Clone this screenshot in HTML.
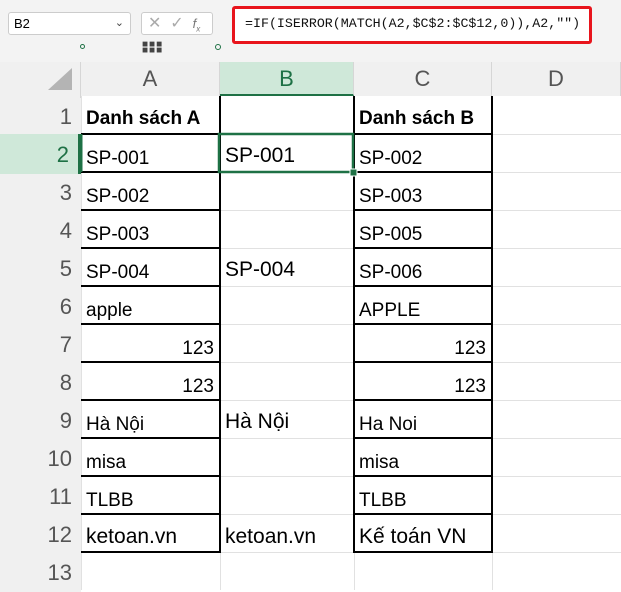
<!DOCTYPE html><html><head><meta charset="utf-8"><style>
*{margin:0;padding:0;box-sizing:border-box}
body{width:621px;height:590px;overflow:hidden;background:#fff;font-family:"Liberation Sans",sans-serif;position:relative}
.a{position:absolute}
.top{left:0;top:0;width:621px;height:62px;background:#f3f3f3}
.cell{position:absolute;font-size:19px;color:#000;white-space:nowrap;padding-left:5px;line-height:38px}
.rh{position:absolute;left:0;width:81px;text-align:right;padding-right:9px;font-size:22px;color:#555;line-height:38px;background:#f0f0f0}
.ch{position:absolute;top:62px;height:34px;font-size:22px;color:#555;text-align:center;line-height:34px;background:#f0f0f0;border-right:1px solid #d6d6d6}
</style></head><body>
<div class="a top"></div>
<div class="a" style="left:8px;top:12px;width:123px;height:23px;background:#fff;border:1px solid #ccc;border-radius:3px;font-size:13px;line-height:21px;padding-left:5px">B2<span style="position:absolute;right:6px;top:0;font-size:11px;color:#444">&#8964;</span></div>
<div class="a" style="top:12px;width:72px;height:23px;background:#fff;border:1px solid #ccc;border-radius:3px;left:141px;font-size:16px;color:#aaa;line-height:21px;padding-left:6px">✕&nbsp;&nbsp;✓&nbsp;&nbsp;<i style="font-size:13px;color:#777">f<sub style="font-size:8px">x</sub></i></div>
<div class="a" style="left:232px;top:6px;width:360px;height:38px;border:3px solid #e8141c;border-radius:3px;background:#fff"></div>
<div class="a" style="left:236px;top:10px;width:350px;height:30px;font-family:'Liberation Mono',monospace;font-size:13.3px;line-height:28px;padding-left:9px;color:#111;white-space:nowrap">=IF(ISERROR(MATCH(A2,$C$2:$C$12,0)),A2,"")</div>
<div class="a" style="left:80px;top:44px;width:5px;height:5px;border:1.5px solid #1e7145;border-radius:50%"></div>
<div class="a" style="left:215px;top:44px;width:6px;height:6px;border:1.5px solid #1e7145;border-radius:50%"></div>
<div class="a" style="left:142px;top:42px;font-size:10px;letter-spacing:1px;color:#444;line-height:6px">■■■<br>■■■</div>
<div class="a" style="left:0;top:62px;width:81px;height:34px;background:#f0f0f0;border-right:1px solid #d6d6d6"></div>
<div class="a" style="left:48px;top:68px;width:0;height:0;border-left:24px solid transparent;border-bottom:22px solid #b4b4b4"></div>
<div class="ch" style="left:81px;width:139px">A</div>
<div class="ch" style="left:220px;width:134px;background:#cfe8d9;color:#1e7145;border-bottom:2px solid #1e7145">B</div>
<div class="ch" style="left:354px;width:138px">C</div>
<div class="ch" style="left:492px;width:129px">D</div>
<svg class="a" style="left:0;top:96px" width="621" height="494">
<g stroke="#e1e1e1" stroke-width="1">
<line x1="81" y1="38.5" x2="621" y2="38.5"/><line x1="81" y1="76.5" x2="621" y2="76.5"/><line x1="81" y1="114.5" x2="621" y2="114.5"/><line x1="81" y1="152.5" x2="621" y2="152.5"/><line x1="81" y1="190.5" x2="621" y2="190.5"/><line x1="81" y1="228.5" x2="621" y2="228.5"/><line x1="81" y1="266.5" x2="621" y2="266.5"/><line x1="81" y1="304.5" x2="621" y2="304.5"/><line x1="81" y1="342.5" x2="621" y2="342.5"/><line x1="81" y1="380.5" x2="621" y2="380.5"/><line x1="81" y1="418.5" x2="621" y2="418.5"/><line x1="81" y1="456.5" x2="621" y2="456.5"/>
<line x1="81.5" y1="0" x2="81.5" y2="494"/><line x1="220.5" y1="0" x2="220.5" y2="494"/><line x1="354.5" y1="0" x2="354.5" y2="494"/><line x1="492.5" y1="0" x2="492.5" y2="494"/>
</g>
<g stroke="#000" stroke-width="2">
<line x1="220" y1="0" x2="220" y2="457"/><line x1="354" y1="0" x2="354" y2="457"/><line x1="492" y1="0" x2="492" y2="457"/>
<line x1="81" y1="38" x2="220" y2="38"/><line x1="81" y1="76" x2="220" y2="76"/><line x1="81" y1="114" x2="220" y2="114"/><line x1="81" y1="152" x2="220" y2="152"/><line x1="81" y1="190" x2="220" y2="190"/><line x1="81" y1="228" x2="220" y2="228"/><line x1="81" y1="266" x2="220" y2="266"/><line x1="81" y1="304" x2="220" y2="304"/><line x1="81" y1="342" x2="220" y2="342"/><line x1="81" y1="380" x2="220" y2="380"/><line x1="81" y1="418" x2="220" y2="418"/><line x1="81" y1="456" x2="220" y2="456"/>
<line x1="354" y1="38" x2="492" y2="38"/><line x1="354" y1="76" x2="492" y2="76"/><line x1="354" y1="114" x2="492" y2="114"/><line x1="354" y1="152" x2="492" y2="152"/><line x1="354" y1="190" x2="492" y2="190"/><line x1="354" y1="228" x2="492" y2="228"/><line x1="354" y1="266" x2="492" y2="266"/><line x1="354" y1="304" x2="492" y2="304"/><line x1="354" y1="342" x2="492" y2="342"/><line x1="354" y1="380" x2="492" y2="380"/><line x1="354" y1="418" x2="492" y2="418"/><line x1="354" y1="456" x2="492" y2="456"/>
</g>
<rect x="219" y="38" width="134" height="38" fill="none" stroke="#1e7145" stroke-width="2.5"/>
<rect x="350" y="73" width="7" height="7" fill="#1e7145" stroke="#fff" stroke-width="1"/>
<line x1="81" y1="38" x2="81" y2="76" stroke="#1e7145" stroke-width="3"/>
</svg>
<div class="a" style="left:0;top:96px;width:81px;height:494px;background:#f0f0f0;border-right:1px solid #d6d6d6"></div>
<div class="rh" style="top:98px">1</div>
<div class="rh" style="top:134px;background:#cfe8d9;color:#1e7145;border-right:3px solid #1e7145;line-height:42px">2</div>
<div class="rh" style="top:174px">3</div><div class="rh" style="top:212px">4</div><div class="rh" style="top:250px">5</div><div class="rh" style="top:288px">6</div><div class="rh" style="top:326px">7</div><div class="rh" style="top:364px">8</div><div class="rh" style="top:402px">9</div><div class="rh" style="top:440px">10</div><div class="rh" style="top:478px">11</div><div class="rh" style="top:516px">12</div><div class="rh" style="top:554px">13</div>
<div class="cell" style="left:81px;top:100px;font-weight:bold">Danh sách A</div>
<div class="cell" style="left:354px;top:100px;font-weight:bold">Danh sách B</div>
<div class="cell" style="left:81px;top:140px">SP-001</div>
<div class="cell" style="left:81px;top:178px">SP-002</div>
<div class="cell" style="left:81px;top:216px">SP-003</div>
<div class="cell" style="left:81px;top:254px">SP-004</div>
<div class="cell" style="left:81px;top:292px">apple</div>
<div class="cell" style="left:81px;top:330px;width:139px;text-align:right;padding-right:6px">123</div>
<div class="cell" style="left:81px;top:368px;width:139px;text-align:right;padding-right:6px">123</div>
<div class="cell" style="left:81px;top:406px">Hà Nội</div>
<div class="cell" style="left:81px;top:444px">misa</div>
<div class="cell" style="left:81px;top:482px">TLBB</div>
<div class="cell" style="left:81px;top:518px;font-size:21px">ketoan.vn</div>
<div class="cell" style="left:220px;top:137px;font-size:21px">SP-001</div>
<div class="cell" style="left:220px;top:251px;font-size:21px">SP-004</div>
<div class="cell" style="left:220px;top:403px;font-size:21px">Hà Nội</div>
<div class="cell" style="left:220px;top:518px;font-size:21px">ketoan.vn</div>
<div class="cell" style="left:354px;top:140px">SP-002</div>
<div class="cell" style="left:354px;top:178px">SP-003</div>
<div class="cell" style="left:354px;top:216px">SP-005</div>
<div class="cell" style="left:354px;top:254px">SP-006</div>
<div class="cell" style="left:354px;top:292px">APPLE</div>
<div class="cell" style="left:354px;top:330px;width:138px;text-align:right;padding-right:6px">123</div>
<div class="cell" style="left:354px;top:368px;width:138px;text-align:right;padding-right:6px">123</div>
<div class="cell" style="left:354px;top:406px">Ha Noi</div>
<div class="cell" style="left:354px;top:444px">misa</div>
<div class="cell" style="left:354px;top:482px">TLBB</div>
<div class="cell" style="left:354px;top:518px;font-size:21px">Kế toán VN</div>
</body></html>
